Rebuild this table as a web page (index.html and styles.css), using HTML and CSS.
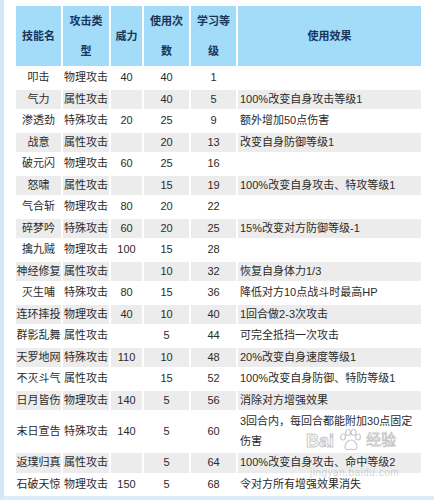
FILE: index.html
```html
<!DOCTYPE html>
<html lang="zh-CN">
<head>
<meta charset="utf-8">
<title>技能表</title>
<link rel="stylesheet" href="styles.css">
</head>
<body>
<div class="frame">
  <table class="skills">
    <colgroup>
      <col class="c1"><col class="c2"><col class="c3"><col class="c4"><col class="c5"><col class="c6">
    </colgroup>
    <thead>
      <tr>
        <th>技能名</th>
        <th>攻击类<br>型</th>
        <th>威力</th>
        <th>使用次<br>数</th>
        <th>学习等<br>级</th>
        <th>使用效果</th>
      </tr>
    </thead>
    <tbody>
      <tr><td class="name">叩击</td><td class="type">物理攻击</td><td class="num">40</td><td class="num">40</td><td class="num">1</td><td class="eff"></td></tr>
      <tr class="alt"><td class="name">气力</td><td class="type">属性攻击</td><td class="num"></td><td class="num">40</td><td class="num">5</td><td class="eff">100%改变自身攻击等级1</td></tr>
      <tr><td class="name">渗透劲</td><td class="type">特殊攻击</td><td class="num">20</td><td class="num">25</td><td class="num">9</td><td class="eff">额外增加50点伤害</td></tr>
      <tr class="alt"><td class="name">战意</td><td class="type">属性攻击</td><td class="num"></td><td class="num">20</td><td class="num">13</td><td class="eff">改变自身防御等级1</td></tr>
      <tr><td class="name">破元闪</td><td class="type">物理攻击</td><td class="num">60</td><td class="num">25</td><td class="num">16</td><td class="eff"></td></tr>
      <tr class="alt"><td class="name">怒啸</td><td class="type">属性攻击</td><td class="num"></td><td class="num">15</td><td class="num">19</td><td class="eff">100%改变自身攻击、特攻等级1</td></tr>
      <tr><td class="name">气合斩</td><td class="type">物理攻击</td><td class="num">80</td><td class="num">20</td><td class="num">22</td><td class="eff"></td></tr>
      <tr class="alt"><td class="name">碎梦吟</td><td class="type">特殊攻击</td><td class="num">60</td><td class="num">20</td><td class="num">25</td><td class="eff">15%改变对方防御等级-1</td></tr>
      <tr><td class="name">擒九贼</td><td class="type">物理攻击</td><td class="num">100</td><td class="num">15</td><td class="num">28</td><td class="eff"></td></tr>
      <tr class="alt"><td class="name">神经修复</td><td class="type">属性攻击</td><td class="num"></td><td class="num">10</td><td class="num">32</td><td class="eff">恢复自身体力1/3</td></tr>
      <tr><td class="name">灭生哺</td><td class="type">特殊攻击</td><td class="num">80</td><td class="num">15</td><td class="num">36</td><td class="eff">降低对方10点战斗时最高HP</td></tr>
      <tr class="alt"><td class="name">连环摔投</td><td class="type">物理攻击</td><td class="num">40</td><td class="num">10</td><td class="num">40</td><td class="eff">1回合做2-3次攻击</td></tr>
      <tr><td class="name">群影乱舞</td><td class="type">属性攻击</td><td class="num"></td><td class="num">5</td><td class="num">44</td><td class="eff">可完全抵挡一次攻击</td></tr>
      <tr class="alt"><td class="name">天罗地网</td><td class="type">特殊攻击</td><td class="num">110</td><td class="num">10</td><td class="num">48</td><td class="eff">20%改变自身速度等级1</td></tr>
      <tr><td class="name">不灭斗气</td><td class="type">属性攻击</td><td class="num"></td><td class="num">15</td><td class="num">52</td><td class="eff">100%改变自身防御、特防等级1</td></tr>
      <tr class="alt"><td class="name">日月皆伤</td><td class="type">物理攻击</td><td class="num">140</td><td class="num">5</td><td class="num">56</td><td class="eff">消除对方增强效果</td></tr>
      <tr><td class="name">末日宣告</td><td class="type">特殊攻击</td><td class="num">140</td><td class="num">5</td><td class="num">60</td><td class="eff">3回合内，每回合都能附加30点固定<br>伤害</td></tr>
      <tr class="alt"><td class="name">返璞归真</td><td class="type">属性攻击</td><td class="num"></td><td class="num">5</td><td class="num">64</td><td class="eff">100%改变自身攻击、命中等级2</td></tr>
      <tr><td class="name">石破天惊</td><td class="type">物理攻击</td><td class="num">150</td><td class="num">5</td><td class="num">68</td><td class="eff">令对方所有增强效果消失</td></tr>
    </tbody>
  </table>
  <div class="watermark">
    <span class="wm-bai">Bai</span>
    <svg class="wm-paw" width="24" height="24" viewBox="0 0 24 24">
      <g fill="none" stroke="currentColor" stroke-width="1.2">
        <ellipse cx="5" cy="9" rx="2.4" ry="3"/>
        <ellipse cx="10" cy="4.5" rx="2.4" ry="3"/>
        <ellipse cx="15.5" cy="4.5" rx="2.4" ry="3"/>
        <ellipse cx="20" cy="9" rx="2.4" ry="3"/>
        <path d="M7 19c0-4 3-7 6-7s6 3 6 7c0 3-3 3-6 2-3 1-6 1-6-2z"/>
      </g>
    </svg>
    <span class="wm-cn">经验</span>
    <span class="wm-url">jingyan.baidu.com</span>
  </div>
</div>
</body>
</html>
```

FILE: styles.css
```css
html, body {
  margin: 0;
  padding: 0;
  background: #ffffff;
}

.frame {
  position: relative;
  width: 420px;
  height: 492px;
  padding: 4px 0 0 10px;
  box-sizing: content-box;
  border-left: 4px solid #d3e8f6;
  border-bottom: 4px solid #dcedf9;
}

.skills {
  border-collapse: separate;
  border-spacing: 2px;
  table-layout: fixed;
  width: 409px;
  font-family: "Liberation Sans", "Noto Sans CJK SC", sans-serif;
  font-size: 11px;
  color: #2b2b2b;
}

.c1 { width: 45px; }
.c2 { width: 46px; }
.c3 { width: 31px; }
.c4 { width: 45px; }
.c5 { width: 45px; }
.c6 { width: 183px; }

.skills th {
  background: #a2dcf8;
  color: #17365a;
  font-weight: bold;
  line-height: 30px;
  height: 60px;
  padding: 0;
  text-align: center;
  vertical-align: middle;
}

.skills td {
  padding: 0;
  line-height: 19.5px;
  height: 19.5px;
  vertical-align: middle;
  white-space: nowrap;
}

.skills tr.alt td {
  background: #ececec;
}

.skills td.name { text-align: center; }
.skills td.type { text-align: left; padding-left: 1px; }
.skills td.num { text-align: center; }
.skills td.eff { text-align: left; padding-left: 2px; }

.watermark {
  position: absolute;
  left: 298px;
  top: 428px;
  width: 120px;
  height: 55px;
  color: rgba(140, 140, 140, 0.45);
  font-family: "Liberation Sans", "Noto Sans CJK SC", sans-serif;
  pointer-events: none;
}

.wm-bai {
  position: absolute;
  left: 4px;
  top: 4px;
  font-size: 18px;
  line-height: 18px;
  font-weight: bold;
  color: transparent;
  -webkit-text-stroke: 1px rgba(140, 140, 140, 0.5);
}

.wm-paw {
  position: absolute;
  left: 36px;
  top: 0;
}

.wm-cn {
  position: absolute;
  left: 64px;
  top: 4px;
  font-size: 15px;
  line-height: 15px;
  color: transparent;
  -webkit-text-stroke: 0.8px rgba(140, 140, 140, 0.5);
}

.wm-url {
  position: absolute;
  left: 8px;
  top: 40px;
  font-size: 10px;
  line-height: 10px;
  letter-spacing: 0.5px;
  color: rgba(150, 150, 150, 0.4);
}
```
